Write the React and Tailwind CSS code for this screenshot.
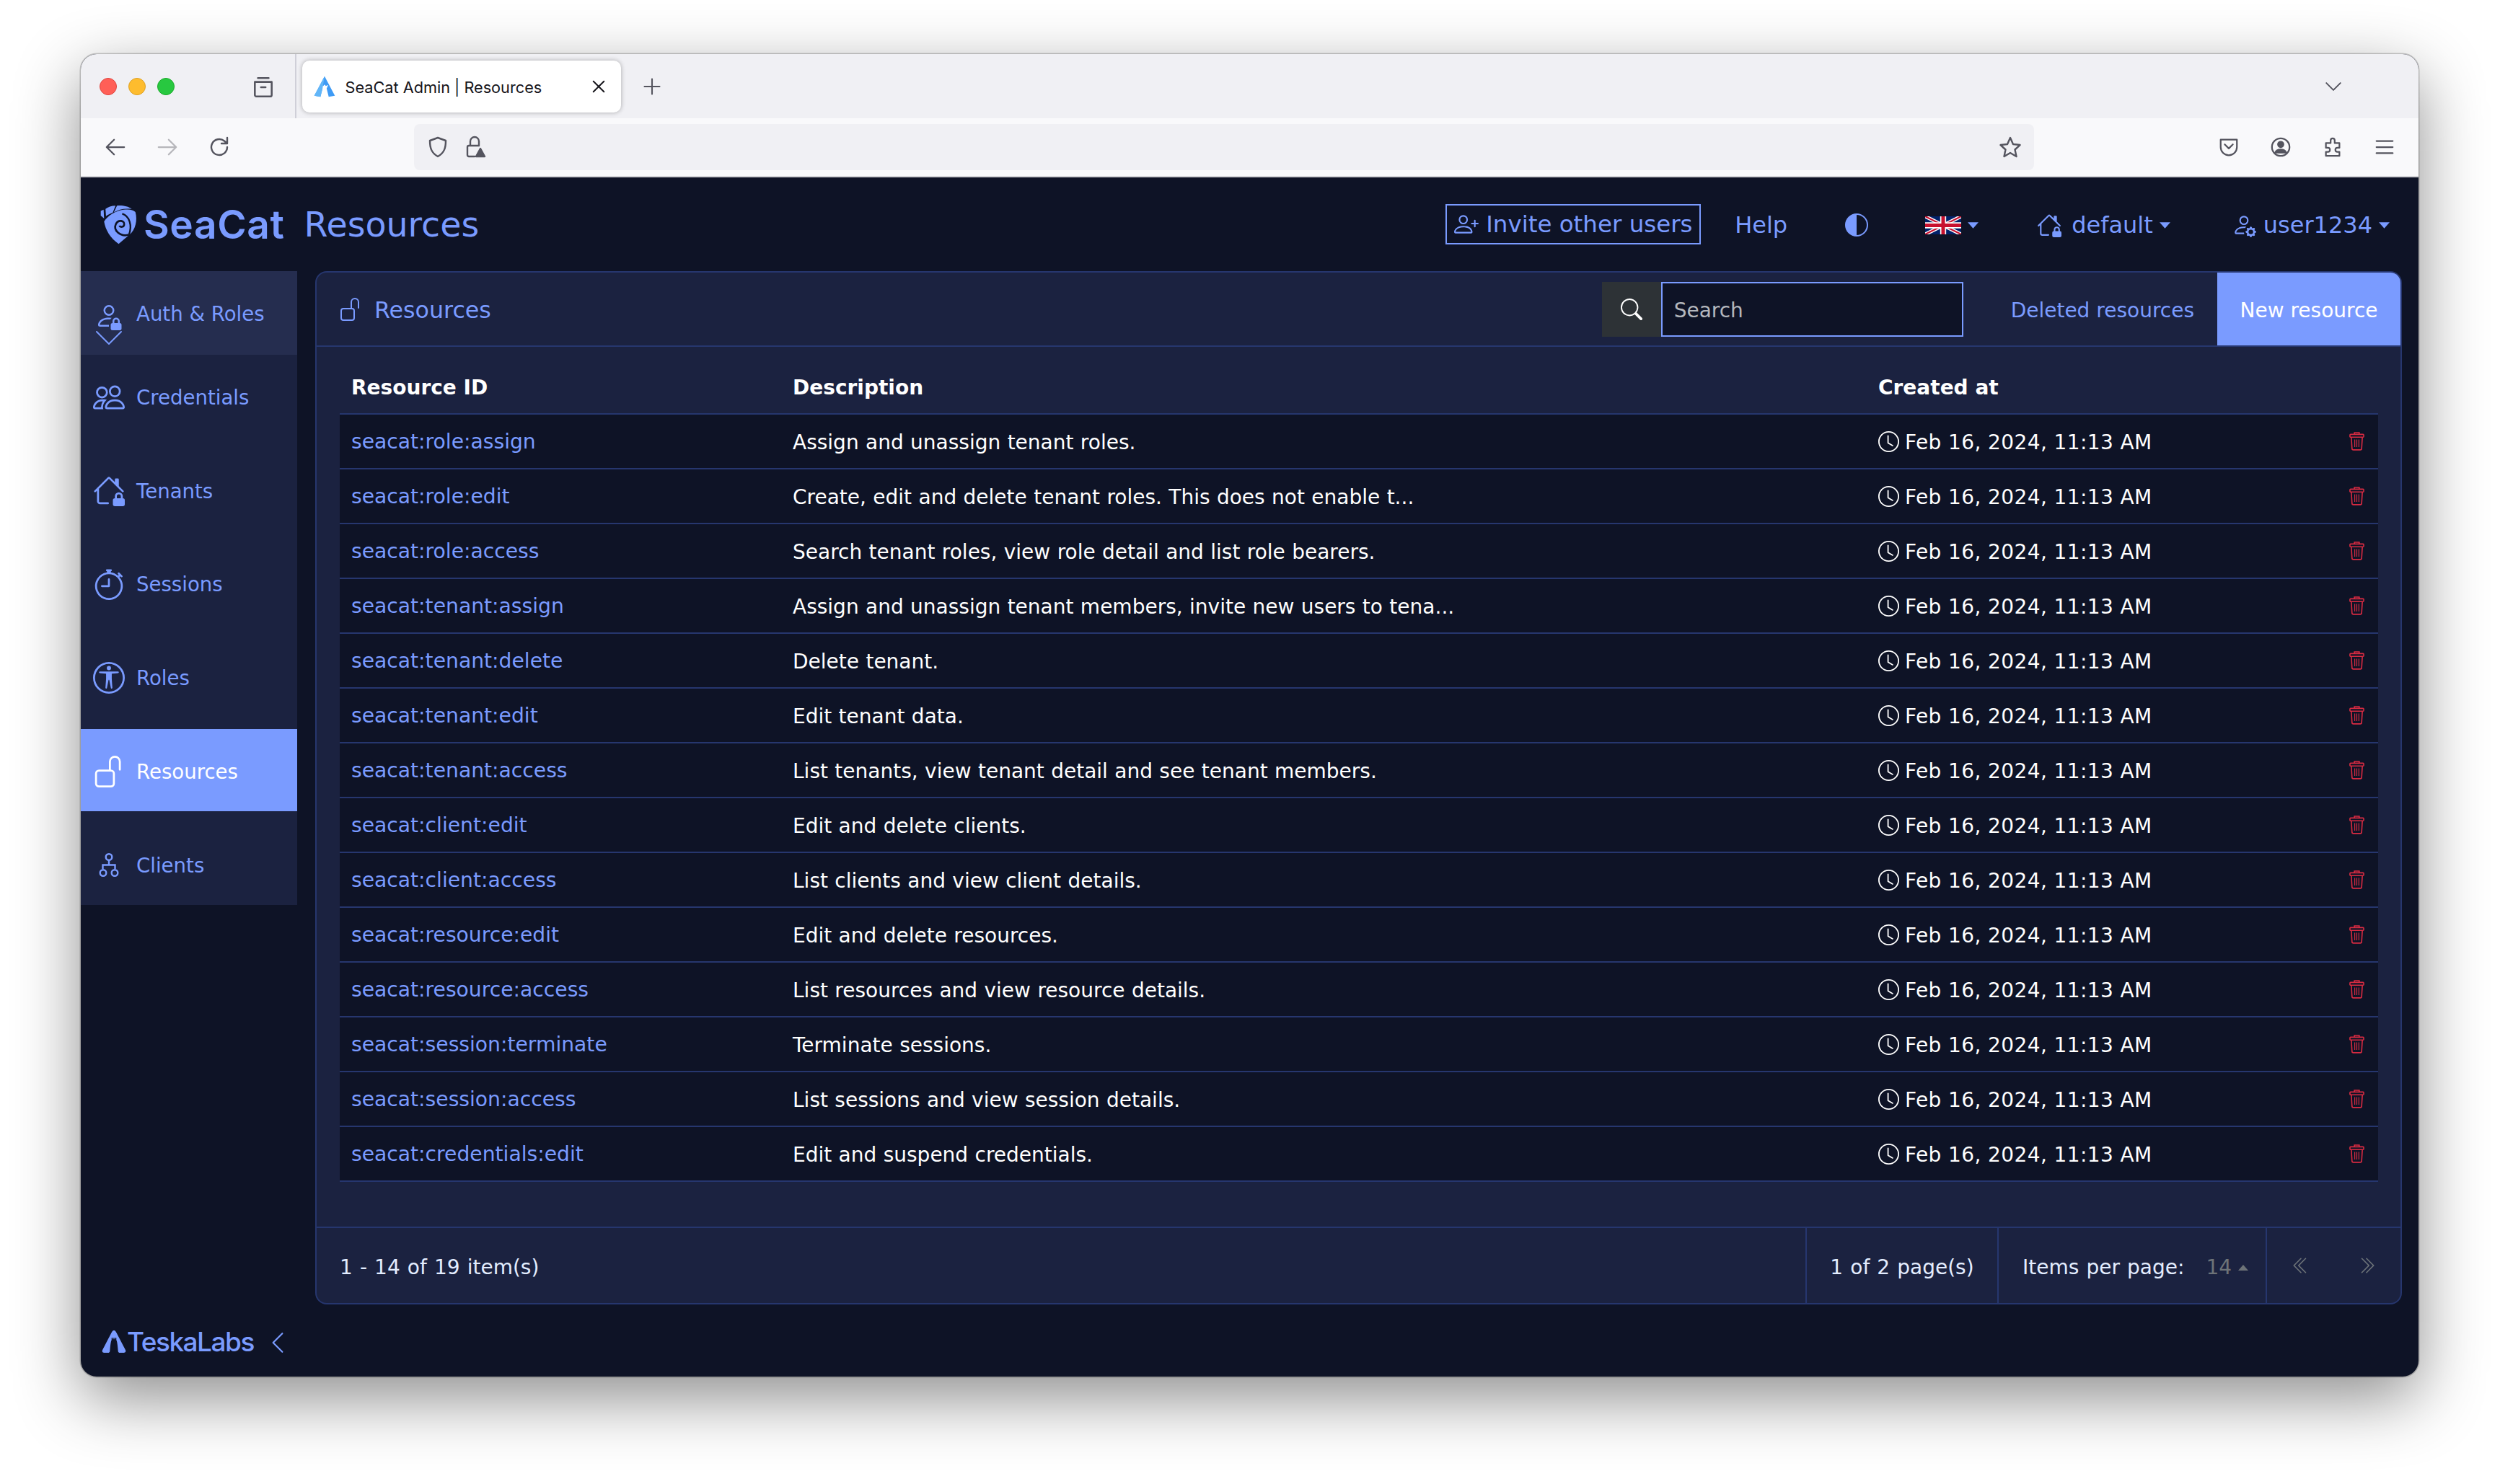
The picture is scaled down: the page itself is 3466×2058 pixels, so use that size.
import {
  BsPersonLock, BsPeople, BsHouseLock, BsStopwatch, BsUniversalAccessCircle, BsUnlock,
  BsClock, BsSearch, BsCircleHalf, BsChevronDoubleLeft, BsChevronDoubleRight, BsChevronLeft,
  BsPersonPlus, BsPersonGear,
} from 'react-icons/bs';

const rows = [
  ['seacat:role:assign', 'Assign and unassign tenant roles.'],
  ['seacat:role:edit', 'Create, edit and delete tenant roles. This does not enable t...'],
  ['seacat:role:access', 'Search tenant roles, view role detail and list role bearers.'],
  ['seacat:tenant:assign', 'Assign and unassign tenant members, invite new users to tena...'],
  ['seacat:tenant:delete', 'Delete tenant.'],
  ['seacat:tenant:edit', 'Edit tenant data.'],
  ['seacat:tenant:access', 'List tenants, view tenant detail and see tenant members.'],
  ['seacat:client:edit', 'Edit and delete clients.'],
  ['seacat:client:access', 'List clients and view client details.'],
  ['seacat:resource:edit', 'Edit and delete resources.'],
  ['seacat:resource:access', 'List resources and view resource details.'],
  ['seacat:session:terminate', 'Terminate sessions.'],
  ['seacat:session:access', 'List sessions and view session details.'],
  ['seacat:credentials:edit', 'Edit and suspend credentials.'],
];

function ClientsIcon({ className }) {
  return (
    <svg viewBox="0 0 28 33" className={className} fill="none" stroke="currentColor" strokeWidth="2.400">
      <circle cx="14" cy="5.500" r="4.300" />
      <path d="M14 10v6.500M5.500 22v-5.500h17V22" />
      <circle cx="6" cy="27.500" r="4.300" />
      <circle cx="22" cy="27.500" r="4.300" />
    </svg>
  );
}

const navItems = [
  { label: 'Credentials', Icon: BsPeople, size: 'w-[44px] h-[44px]' },
  { label: 'Tenants', Icon: BsHouseLock, size: 'w-[44px] h-[44px]' },
  { label: 'Sessions', Icon: BsStopwatch, size: 'w-[44px] h-[44px]' },
  { label: 'Roles', Icon: BsUniversalAccessCircle, size: 'w-[44px] h-[44px]' },
  { label: 'Resources', Icon: BsUnlock, size: 'w-[44px] h-[44px]', active: true },
  { label: 'Clients', Icon: ClientsIcon, size: 'w-[28px] h-[33px] mx-[8px]' },
];

function Caret({ up, className }) {
  return (
    <svg viewBox="0 0 16 10" className={className} fill="currentColor">
      <path d={up ? 'M8 1l7 8H1z' : 'M1 1h14L8 9z'} />
    </svg>
  );
}

function SeaCatMark() {
  return (
    <svg viewBox="25 25 160 165" className="w-[53px] h-[55px] shrink-0">
      <path d="M30 50L42 45L44 82L30 70Z" fill="#7a9bff" />
      <path d="M50 42C60 33 75 28 92 28L80 58C70 62 58 68 52 72Z" fill="#7a9bff" />
      <path d="M98 28C120 26 145 30 160 42C130 38 105 44 85 56Z" fill="#7a9bff" />
      <path d="M44 95C50 130 70 165 105 188L150 150C175 130 185 90 175 55C165 45 150 42 125 45C95 50 60 68 44 95Z" fill="#7a9bff" />
      <path d="M148 150C110 160 82 130 93 106C103 84 132 90 128 108C126 118 112 120 108 112" fill="none" stroke="#0e1326" strokeWidth="8" />
      <path d="M120 62C150 72 163 110 148 150" fill="none" stroke="#0e1326" strokeWidth="7" />
    </svg>
  );
}

function TabFavicon() {
  return (
    <svg viewBox="4 4 42 42" className="w-[30px] h-[30px] shrink-0">
      <path d="M25 5L45 43L33 45L29 29L32 22L27.500 24L25 21L22.500 24L18 22L21 29L17 45L5 43Z" fill="#3f9bf5" />
      <path d="M25 5L15 24L5 43L17 45L21 29Z" fill="#62b6f8" />
    </svg>
  );
}

function TeskaMark() {
  return (
    <svg viewBox="0 0 36 34" className="w-[36px] h-[32px] shrink-0">
      <path d="M18 0C20 0 21 2 22 4L35 29C36 32 34 33 32 33H27C25 33 24 32 24 30C23.500 24 23 19 22 15H14C13 19 12.500 24 12 30C12 32 11 33 9 33H4C2 33 0 32 1 29L14 4C15 2 16 0 18 0Z" fill="#7a9bff" />
      <path d="M14.500 11h1.800v2h1v-2h1.400v2h1v-2h1.800v4h-7z" fill="#0e1326" />
    </svg>
  );
}

function UkFlag() {
  return (
    <svg viewBox="0 0 60 30" preserveAspectRatio="none" className="w-[50px] h-[25px]">
      <rect width="60" height="30" fill="#012169" />
      <path d="M0 0L60 30M60 0L0 30" stroke="#fff" strokeWidth="6" />
      <path d="M0 0L60 30M60 0L0 30" stroke="#c8102e" strokeWidth="2.500" />
      <path d="M30 0V30M0 15H60" stroke="#fff" strokeWidth="10" />
      <path d="M30 0V30M0 15H60" stroke="#c8102e" strokeWidth="6" />
    </svg>
  );
}

function TrashIcon() {
  return (
    <svg viewBox="0 0 22 28" className="w-[21px] h-[27px]" fill="none" stroke="#d92b42" strokeWidth="1.700">
      <path d="M7.500 4V2h7v2" />
      <rect x="1" y="4.500" width="20" height="4" rx="1" />
      <path d="M3 9l1 16c0 1 1 2 2 2h10c1 0 2-1 2-2l1-16" />
      <path d="M8 12v11M11 12v11M14 12v11" strokeWidth="1.200" />
    </svg>
  );
}

function ToolIcon({ children, className }) {
  return (
    <svg viewBox="0 0 32 32" className={className} fill="none" stroke="#54545e" strokeWidth="2.400" strokeLinecap="round" strokeLinejoin="round">
      {children}
    </svg>
  );
}

function BrowserChrome() {
  return (
    <>
      <div className="h-[89px] shrink-0 bg-[#f0f0f4] flex items-center relative">
        <div className="flex items-center gap-[16px] ml-[26px]">
          <span className="w-[24px] h-[24px] rounded-full bg-[#ff5f57] border border-[#e0443e]" />
          <span className="w-[24px] h-[24px] rounded-full bg-[#febc2e] border border-[#dea123]" />
          <span className="w-[24px] h-[24px] rounded-full bg-[#28c840] border border-[#1aab29]" />
        </div>
        <ToolIcon className="w-[34px] h-[34px] ml-[106px]">
          <path d="M9 5h14M5 10h22v17a2 2 0 0 1-2 2H7a2 2 0 0 1-2-2zM13 17h6" />
        </ToolIcon>
        <div className="w-[1.500px] self-stretch bg-[#cfcfd8] ml-[27px]" />
        <div className="ml-[8px] w-[442px] h-[72px] bg-white rounded-[10px] shadow-[0_0_6px_rgba(0,0,0,0.3)] flex items-center pl-[16px] pr-[18px]">
          <TabFavicon />
          <span className="ml-[14px] pt-[4px] text-[21.700px] text-[#15141a] font-['Inter',sans-serif] whitespace-nowrap">SeaCat Admin | Resources</span>
          <ToolIcon className="w-[26px] h-[26px] ml-auto">
            <path d="M7 7l18 18M25 7L7 25" stroke="#15141a" />
          </ToolIcon>
        </div>
        <ToolIcon className="w-[28px] h-[28px] ml-[29px]">
          <path d="M16 4v24M4 16h24" />
        </ToolIcon>
        <ToolIcon className="w-[26px] h-[26px] ml-auto mr-[105px]">
          <path d="M4 10l12 12 12-12" />
        </ToolIcon>
      </div>
      <div className="h-[82px] shrink-0 bg-[#f9f9fb] border-b-2 border-[#d4d4d8] flex items-center">
        <ToolIcon className="w-[30px] h-[30px] ml-[33px]">
          <path d="M29 16H4M14 5L3 16l11 11" />
        </ToolIcon>
        <ToolIcon className="w-[30px] h-[30px] ml-[42px] opacity-40">
          <path d="M3 16h25M18 5l11 11-11 11" />
        </ToolIcon>
        <ToolIcon className="w-[32px] h-[32px] ml-[41px]">
          <path d="M27 16a11 11 0 1 1-4-8.500L27 11M27 3v8h-8" />
        </ToolIcon>
        <div className="ml-[254px] w-[2246px] h-[64px] bg-[#f0f0f4] rounded-[8px] flex items-center pl-[17px] pr-[17px]">
          <ToolIcon className="w-[32px] h-[32px]">
            <path d="M16 3l11 4c0 10-2 17-11 22C7 24 5 17 5 7z" />
          </ToolIcon>
          <ToolIcon className="w-[32px] h-[32px] ml-[20px]">
            <path d="M9 14V8a6 6 0 0 1 12 0v6M15 29H7a2 2 0 0 1-2-2V16a2 2 0 0 1 2-2h13" />
            <path d="M23 18l6 11H17z" fill="#54545e" />
          </ToolIcon>
          <ToolIcon className="w-[32px] h-[32px] ml-auto">
            <path d="M16 3l4 9 9.500 1-7 6.500 2 9.500-8.500-5-8.500 5 2-9.500-7-6.500 9.500-1z" />
          </ToolIcon>
        </div>
        <div className="flex items-center gap-[42px] ml-[255px]">
          <ToolIcon className="w-[30px] h-[30px]">
            <path d="M4 5h24v11a12 12 0 0 1-24 0zM10 12l6 6 6-6" />
          </ToolIcon>
          <ToolIcon className="w-[30px] h-[30px]">
            <circle cx="16" cy="16" r="13" />
            <circle cx="16" cy="12" r="4" fill="#54545e" />
            <path d="M8 24c2-6 14-6 16 0z" fill="#54545e" />
          </ToolIcon>
          <ToolIcon className="w-[30px] h-[30px]">
            <path d="M6 10h7V6a3 3 0 0 1 6 0v4h7v7h-3a3 3 0 0 0 0 6h3v6H6v-6h3a3 3 0 0 0 0-6H6z" />
          </ToolIcon>
          <ToolIcon className="w-[30px] h-[30px]">
            <path d="M4 7h24M4 16h24M4 25h24" />
          </ToolIcon>
        </div>
      </div>
    </>
  );
}

function TopBar() {
  return (
    <header className="h-[130px] shrink-0 flex items-center text-[#7a9bff] text-[32px]">
      <div className="ml-[26px] flex items-center">
        <SeaCatMark />
        <span className="ml-[8px] text-[55px] leading-none font-semibold font-['Inter',sans-serif] tracking-[0.600px]">SeaCat</span>
      </div>
      <h1 className="ml-[27px] pt-[2px] text-[47.500px] font-normal leading-none">Resources</h1>
      <div className="ml-auto flex items-center pr-[39px] pt-[2px]">
        <button className="w-[354px] h-[56px] -mt-[2px] border-2 border-[#7a9bff] flex items-center pl-[10px] text-[32.500px] whitespace-nowrap">
          <BsPersonPlus className="w-[34px] h-[34px] mr-[10px] shrink-0" />
          Invite other users
        </button>
        <span className="ml-[47px]">Help</span>
        <BsCircleHalf className="w-[32px] h-[32px] ml-[80px]" />
        <span className="ml-[79px] flex items-center">
          <UkFlag />
          <Caret className="w-[17px] h-[11px] ml-[8px]" />
        </span>
        <span className="ml-[80px] flex items-center">
          <BsHouseLock className="w-[34px] h-[34px] mr-[14px]" />
          default
          <Caret className="w-[17px] h-[11px] ml-[8px]" />
        </span>
        <span className="ml-[84px] flex items-center">
          <BsPersonGear className="w-[34px] h-[34px] mr-[10px]" />
          user1234
          <Caret className="w-[17px] h-[11px] ml-[8px]" />
        </span>
      </div>
    </header>
  );
}

function ChevronDownIcon() {
  return (
    <svg viewBox="0 0 36 20" className="w-[36px] h-[20px]" fill="none" stroke="currentColor" strokeWidth="2" strokeLinecap="round">
      <path d="M1 2l17 17L35 2" />
    </svg>
  );
}

function Sidebar() {
  return (
    <aside className="w-[300px] shrink-0 flex flex-col text-[27.600px] text-[#7a9bff]">
      <div className="bg-[#1b2240]">
        <div className="h-[116px] bg-[#252d4f] flex items-center pl-[17px]">
          <div className="w-[44px] mt-[28px] flex flex-col items-center shrink-0">
            <BsPersonLock className="w-[40px] h-[40px]" />
            <ChevronDownIcon />
          </div>
          <span className="ml-[16px] pt-[3px]">Auth &amp; Roles</span>
        </div>
        <div className="flex flex-col gap-[15.800px]">
          {navItems.map(({ label, Icon, size, active }) => (
            <div
              key={label}
              className={`h-[114px] flex items-center pl-[17px] ${active ? 'bg-[#7a9bff] text-white' : ''}`}
            >
              <Icon className={`${size} mt-[3px] shrink-0`} />
              <span className="ml-[16px] pt-[5px]">{label}</span>
            </div>
          ))}
        </div>
      </div>
      <div className="mt-auto h-[96px] flex items-start pl-[28px] pt-[32px]">
        <TeskaMark />
        <span className="text-[37px] leading-[32px] font-medium font-['Inter',sans-serif] tracking-[-1.500px]">TeskaLabs</span>
        <BsChevronLeft className="w-[34px] h-[34px] ml-[16px]" />
      </div>
    </aside>
  );
}

function ResourceTable() {
  return (
    <div className="w-[2826px] ml-[32px] flex-1 text-[28px]">
      <div className="h-[92px] grid grid-cols-[612px_1505px_649px_60px] items-center font-bold text-white pt-[22px]">
        <span className="pl-[16px]">Resource ID</span>
        <span className="pl-[16px]">Description</span>
        <span className="pl-[16px]">Created at</span>
      </div>
      <div className="border-t-2 border-[#26366e]">
        {rows.map(([id, description]) => (
          <div key={id} className="h-[76px] grid grid-cols-[612px_1505px_649px_60px] items-center bg-[#0e1326] border-b-2 border-[#26366e] text-white">
            <span className="pl-[16px] pt-[3px] text-[28.200px] text-[#7a9bff] whitespace-nowrap">{id}</span>
            <span className="pl-[16px] pt-[3px] whitespace-nowrap [word-spacing:0.500px]">{description}</span>
            <span className="pl-[16px] flex items-center whitespace-nowrap">
              <BsClock className="w-[29px] h-[29px] mr-[8px] shrink-0" />
              <span className="pt-[3px] tracking-[0.400px]">Feb 16, 2024, 11:13 AM</span>
            </span>
            <span className="flex justify-center -mt-[2px]">
              <TrashIcon />
            </span>
          </div>
        ))}
      </div>
    </div>
  );
}

function Panel() {
  return (
    <main className="ml-[25px] mr-[23px] mb-[100px] flex-1 min-w-0 bg-[#1b2240] border-2 border-[#26366e] rounded-[16px] overflow-hidden flex flex-col">
      <div className="h-[103px] shrink-0 border-b-2 border-[#26366e] flex items-center text-[#7a9bff]">
        <BsUnlock className="w-[32px] h-[32px] ml-[31px]" />
        <span className="ml-[17px] pt-[5px] text-[31.700px]">Resources</span>
        <div className="ml-auto flex items-center h-[76px]">
          <div className="w-[82px] h-full bg-[#2d3236] flex items-center justify-center text-white">
            <BsSearch className="w-[30px] h-[30px]" />
          </div>
          <div className="w-[419px] h-full bg-[#0e1326] border-2 border-[#7a9bff] flex items-center pl-[16px] pt-[5px] text-[28px] text-[#b4b7bd]">
            Search
          </div>
        </div>
        <span className="ml-[66px] pt-[5px] text-[28px] whitespace-nowrap">Deleted resources</span>
        <button className="ml-[32px] w-[254px] h-full pt-[5px] bg-[#7a9bff] text-white text-[28px]">New resource</button>
      </div>
      <ResourceTable />
      <div className="h-[106px] shrink-0 border-t-2 border-[#26366e] flex items-stretch text-[28px] text-[#e3edff] [word-spacing:1.200px]">
        <div className="flex items-center flex-1 pl-[32px] pt-[6px]">1 - 14 of 19 item(s)</div>
        <div className="w-[266px] border-l-2 border-[#26366e] flex items-center justify-center pt-[6px] whitespace-nowrap">1 of 2 page(s)</div>
        <div className="w-[372px] border-l-2 border-[#26366e] flex items-center pl-[33px] pt-[6px] whitespace-nowrap">
          Items per page:
          <span className="ml-[30px] text-[#6d7378]">14</span>
          <Caret up className="w-[16px] h-[10px] ml-[8px] text-[#6d7378]" />
        </div>
        <div className="w-[187px] border-l-2 border-[#26366e] flex items-center justify-between pl-[34px] pr-[34px] text-[#6d7378]">
          <BsChevronDoubleLeft className="w-[26px] h-[26px]" />
          <BsChevronDoubleRight className="w-[26px] h-[26px]" />
        </div>
      </div>
    </main>
  );
}

export default function App() {
  return (
    <div className="w-[3466px] h-[2058px] bg-white pt-[75px] pl-[112px] font-['DejaVu_Sans',sans-serif]">
      <div className="w-[3241px] h-[1834px] rounded-[22px] overflow-hidden bg-[#0e1326] flex flex-col shadow-[0_30px_90px_rgba(0,0,0,0.45),0_0_0_1.500px_rgba(0,0,0,0.2)]">
        <BrowserChrome />
        <TopBar />
        <div className="flex-1 min-h-0 flex">
          <Sidebar />
          <Panel />
        </div>
      </div>
    </div>
  );
}
